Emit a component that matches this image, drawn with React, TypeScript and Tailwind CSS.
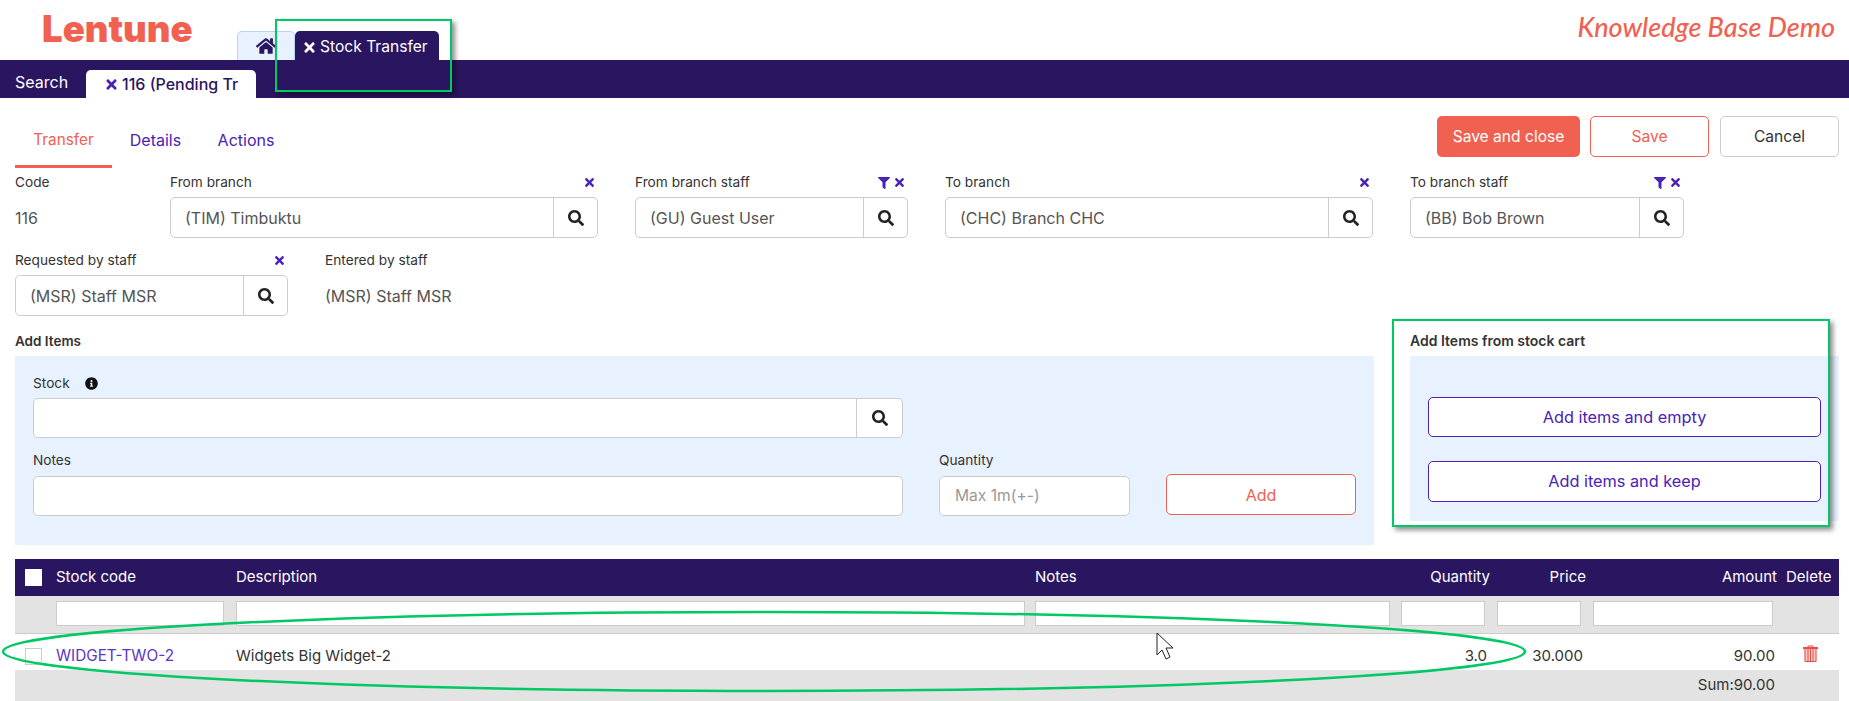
import { FaFilter, FaHome, FaInfoCircle, FaSearch, FaTimes } from "react-icons/fa"

const labelClass = "h-[29px] flex items-center justify-between text-[13.7px] text-[#333333]"
const columns = "grid grid-cols-[41px_180px_799px_366px_96px_96px_193px_53px] items-center"

function Picker({ label, value, width, filter }: { label: string; value: string; width: string; filter?: boolean }) {
	return (
		<div className={width}>
			<div className={labelClass}>
				<span>{label}</span>
				<span className="flex items-center gap-[3px] pr-[2px] text-[#4a22b5]">
					{filter && <FaFilter size={12} />}
					<FaTimes size={13} />
				</span>
			</div>
			<div className="flex h-[41px] rounded-[5px] border border-[#cccccc] bg-white">
				<div className="flex-1 flex items-center pl-[14px] text-[16px] text-[#555555]">{value}</div>
				<div className="w-[44px] border-l border-[#cccccc] flex items-center justify-center text-[#222222]">
					<FaSearch size={16} />
				</div>
			</div>
		</div>
	)
}

function FilterInput({ width }: { width: string }) {
	return <div className={`${width} h-[25px] bg-white border border-[#cccccc]`} />
}

function Trash() {
	return (
		<svg width="15" height="17" viewBox="0 0 15 17" className="text-[#e0524a]">
			<path d="M5 2V1h5v1" fill="none" stroke="currentColor" />
			<rect x="0" y="2" width="15" height="2" fill="currentColor" />
			<rect x="1.5" y="4" width="12" height="13" fill="#f6c9c5" />
			<path d="M2 4v12.5h11V4M5 4v12M7.5 4v12M10 4v12" fill="none" stroke="currentColor" />
		</svg>
	)
}

export default function App() {
	return (
		<div className="relative w-[1849px] h-[701px] overflow-hidden bg-white font-['Inter',sans-serif] text-[#333333]">
			{/* top header */}
			<div className="h-[60px] flex">
				<div className="w-[237px] pl-[42px] pt-[8px] text-[36.5px] leading-[42px] font-black text-[#f06151]">Lentune</div>
				<div className="flex items-end">
					<div className="w-[58px] h-[29px] flex items-center justify-center rounded-t-[5px] border border-b-0 border-[#b8d4f5] bg-[#e7f2fe] text-[#2a1560]">
						<FaHome size={20} />
					</div>
					<div className="w-[144px] h-[29px] flex items-center gap-[3px] pl-[7px] pt-[3px] rounded-t-[5px] bg-[#2a1560] text-white text-[15.6px]">
						<FaTimes size={15} />
						<span>Stock Transfer</span>
					</div>
				</div>
				<div className="flex-1 flex justify-end pr-[14px] pt-[8px] font-['Lato',sans-serif] italic font-medium text-[#f06151] text-[27px] leading-[38px]">
					Knowledge Base Demo
				</div>
			</div>

			{/* second bar */}
			<div className="h-[38px] bg-[#2a1560] flex items-end">
				<div className="w-[86px] h-[38px] pl-[15px] pt-[6px] flex items-center text-white text-[16px]">Search</div>
				<div className="w-[170px] h-[28px] rounded-t-[5px] bg-white flex items-center gap-[3px] pl-[18px] text-[#2a1560] text-[16px] font-medium">
					<FaTimes size={15} className="text-[#4a22b5]" />
					<span>116 (Pending Tr</span>
				</div>
			</div>

			{/* tabs and actions */}
			<div className="h-[70px] flex justify-between px-[10px]">
				<div className="flex pl-[5px]">
					<div className="w-[97px] h-[70px] flex items-center justify-center pt-[17px] border-b-[3px] border-[#f06151] text-[#f06151] text-[15.3px]">Transfer</div>
					<div className="w-[87px] flex items-center justify-center pt-[17px] pb-[3px] text-[#4a22b5] text-[16px]">Details</div>
					<div className="w-[94px] flex items-center justify-center pt-[17px] pb-[3px] text-[#4a22b5] text-[16px]">Actions</div>
				</div>
				<div className="flex gap-[10px] pt-[18px] text-[15.6px]">
					<button className="w-[143px] h-[41px] rounded-[5px] bg-[#f06151] text-white">Save and close</button>
					<button className="w-[119px] h-[41px] rounded-[5px] border border-[#f06151] bg-white text-[#f06151]">Save</button>
					<button className="w-[119px] h-[41px] rounded-[5px] border border-[#cccccc] bg-white text-[#333333] ml-[1px]">Cancel</button>
				</div>
			</div>

			{/* form rows */}
			<div className="flex pl-[15px] gap-[37px]">
				<div className="w-[118px]">
					<div className={labelClass}>Code</div>
					<div className="h-[41px] flex items-center text-[16px] text-[#555555]">116</div>
				</div>
				<Picker label="From branch" value="(TIM) Timbuktu" width="w-[428px]" />
				<Picker label="From branch staff" value="(GU) Guest User" width="w-[273px]" filter />
				<Picker label="To branch" value="(CHC) Branch CHC" width="w-[428px]" />
				<Picker label="To branch staff" value="(BB) Bob Brown" width="w-[274px]" filter />
			</div>
			<div className="flex pl-[15px] gap-[37px] mt-[8px]">
				<Picker label="Requested by staff" value="(MSR) Staff MSR" width="w-[273px]" />
				<div>
					<div className={labelClass}>Entered by staff</div>
					<div className="h-[41px] flex items-center text-[16px] text-[#555555]">(MSR) Staff MSR</div>
				</div>
			</div>

			{/* add items */}
			<div className="flex pl-[15px] gap-[36px]">
				<div className="w-[1359px]">
					<div className="h-[40px] flex items-end pb-[5px] text-[13.5px] font-semibold">Add Items</div>
					<div className="h-[189px] bg-[#e7f2fe] pl-[18px] pt-[17px]">
						<div className="h-[21px] flex items-center gap-[15px] text-[13.7px] mb-[4px]">
							<span>Stock</span>
							<FaInfoCircle size={13} className="text-[#111111]" />
						</div>
						<div className="w-[870px] h-[40px] flex rounded-[5px] border border-[#cccccc] bg-white">
							<div className="flex-1" />
							<div className="w-[46px] border-l border-[#cccccc] flex items-center justify-center text-[#222222]">
								<FaSearch size={16} />
							</div>
						</div>
						<div className="flex mt-[12px]">
							<div className="w-[870px]">
								<div className="h-[21px] flex items-center text-[13.7px] mb-[5px]">Notes</div>
								<div className="h-[40px] rounded-[5px] border border-[#cccccc] bg-white" />
							</div>
							<div className="w-[191px] ml-[36px]">
								<div className="h-[21px] flex items-center text-[13.7px] mb-[5px]">Quantity</div>
								<div className="h-[40px] flex items-center pl-[15px] rounded-[5px] border border-[#cccccc] bg-white text-[15.6px] text-[#999999]">Max 1m(+-)</div>
							</div>
							<button className="w-[190px] h-[41px] mt-[24px] ml-[36px] rounded-[5px] border border-[#f06151] bg-white text-[16px] text-[#f06151]">Add</button>
						</div>
					</div>
				</div>
				<div className="w-[429px]">
					<div className="h-[40px] flex items-end pb-[5px] text-[14px] font-semibold">Add Items from stock cart</div>
					<div className="h-[165px] bg-[#e7f2fe] pl-[18px] pt-[41px] flex flex-col gap-[24px]">
						<button className="w-[393px] h-[40px] rounded-[5px] border border-[#4a22b5] bg-white text-[16.3px] text-[#4a22b5]">Add items and empty</button>
						<button className="w-[393px] h-[41px] rounded-[5px] border border-[#4a22b5] bg-white text-[16.3px] text-[#4a22b5]">Add items and keep</button>
					</div>
				</div>
			</div>

			{/* table */}
			<div className="ml-[15px] w-[1824px] mt-[14px] text-[15px]">
				<div className={`h-[37px] bg-[#2a1560] text-white ${columns}`}>
					<div className="pl-[10px]"><div className="w-[17px] h-[17px] bg-white" /></div>
					<div>Stock code</div>
					<div>Description</div>
					<div>Notes</div>
					<div className="text-right pr-[7px]">Quantity</div>
					<div className="text-right pr-[7px]">Price</div>
					<div className="text-right pr-[9px]">Amount</div>
					<div>Delete</div>
				</div>
				<div className={`h-[37px] pb-[3px] bg-[#e3e3e3] ${columns}`}>
					<div />
					<FilterInput width="w-[168px]" />
					<FilterInput width="w-[789px]" />
					<FilterInput width="w-[355px]" />
					<FilterInput width="w-[84px]" />
					<FilterInput width="w-[84px]" />
					<FilterInput width="w-[180px]" />
					<div />
				</div>
				<div className={`h-[37px] pt-[8px] bg-white border-t border-[#cccccc] ${columns}`}>
					<div className="pl-[10px]"><div className="w-[17px] h-[17px] bg-white border border-[#cccccc]" /></div>
					<div className="text-[15.3px] text-[#5b34c4]">WIDGET-TWO-2</div>
					<div>Widgets Big Widget-2</div>
					<div />
					<div className="text-right pr-[10px]">3.0</div>
					<div className="text-right pr-[10px]">30.000</div>
					<div className="text-right pr-[11px]">90.00</div>
					<div className="pl-[17px] pb-[5px]"><Trash /></div>
				</div>
				<div className="h-[31px] bg-[#e3e3e3] flex items-center justify-end pr-[64px]">Sum:90.00</div>
			</div>

			{/* annotations laid over the screenshot */}
			<div className="absolute left-[275px] top-[19px] w-[177px] h-[73px] border-2 border-[#00c864] shadow-[3px_3px_5px_rgba(0,0,0,0.45)]" />
			<div className="absolute left-[1392px] top-[319px] w-[438px] h-[208px] border-2 border-[#00c864] shadow-[3px_3px_5px_rgba(0,0,0,0.45)]" />
			<svg className="absolute left-0 top-0" width="1849" height="701">
				<ellipse cx="764" cy="651.5" rx="761" ry="39.5" fill="none" stroke="#00c864" strokeWidth="2.5" />
				<path d="M1157 633 L1157 655 L1162 650 L1166 659 L1170 657 L1166 648 L1173 648 Z" fill="#ffffff" stroke="#222222" strokeWidth="1" />
			</svg>
		</div>
	)
}
